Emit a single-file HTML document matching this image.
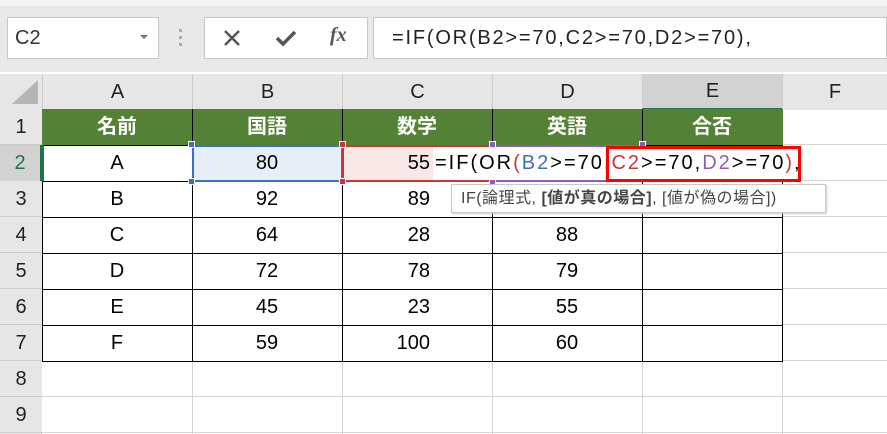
<!DOCTYPE html><html><head><meta charset="utf-8"><style>
body{margin:0;width:887px;height:434px;overflow:hidden;background:#fff;font-family:"Liberation Sans","Noto Sans CJK JP",sans-serif;position:relative}
div{position:absolute;box-sizing:border-box}
.t{font-size:20px;color:#000;text-align:center;line-height:36px}
.h{background:#e6e6e6;color:#222;font-size:20px;text-align:center}
</style></head><body>
<div style="left:0;top:0;width:887px;height:72px;background:#e8e8e8"></div>
<div style="left:0;top:0;width:887px;height:6px;background:#f3f3f3"></div>
<div style="left:7px;top:17px;width:152px;height:42px;background:#fff;border:1px solid #c8c8c8;font-size:20px;line-height:40px;padding-left:7px;color:#333">C2</div>
<div style="left:140px;top:35px;width:0;height:0;border-left:4px solid transparent;border-right:4px solid transparent;border-top:4px solid #777"></div>
<div style="left:179px;top:29px;width:3px;height:3px;background:#aaa;box-shadow:0 7px #aaa,0 14px #aaa"></div>
<div style="left:204px;top:17px;width:164px;height:42px;background:#fff;border:1px solid #c8c8c8"></div>
<svg style="position:absolute;left:222px;top:28px" width="20" height="20"><path d="M3 3L17 17M17 3L3 17" stroke="#555" stroke-width="2.5"/></svg>
<svg style="position:absolute;left:274px;top:28px" width="24" height="20"><path d="M3 10L9 16L21 4" stroke="#555" stroke-width="3.5" fill="none"/></svg>
<div style="left:330px;top:24px;font-family:'Liberation Serif',serif;font-style:italic;font-weight:bold;font-size:20px;color:#555">fx</div>
<div style="left:373px;top:17px;width:514px;height:42px;background:#fff;border:1px solid #c8c8c8;font-size:20px;line-height:40px;padding-left:18px;color:#222;letter-spacing:1.8px">=IF(OR(B2&gt;=70,C2&gt;=70,D2&gt;=70),</div>
<div style="left:0;top:74px;width:887px;height:36px;background:#e6e6e6;border-bottom:1px solid #bbb"></div>
<svg style="position:absolute;left:10px;top:78px" width="30" height="28"><path d="M28 2L28 26L2 26Z" fill="#b5b5b5"/></svg>
<div class="h" style="left:42px;top:74px;width:150px;height:36px;line-height:36px;border-left:1px solid #ccc">A</div>
<div class="h" style="left:192px;top:74px;width:150px;height:36px;line-height:36px;border-left:1px solid #ccc">B</div>
<div class="h" style="left:342px;top:74px;width:150px;height:36px;line-height:36px;border-left:1px solid #ccc">C</div>
<div class="h" style="left:492px;top:74px;width:150px;height:36px;line-height:36px;border-left:1px solid #ccc">D</div>
<div class="h" style="left:642px;top:74px;width:140px;height:36px;line-height:34px;border-left:1px solid #ccc;background:#d2d2d2;border-bottom:2px solid #217346">E</div>
<div class="h" style="left:782px;top:74px;width:105px;height:36px;line-height:36px;border-left:1px solid #ccc">F</div>
<div style="left:0;top:109px;width:42px;height:325px;background:#e6e6e6;border-right:1px solid #bbb"></div>
<div class="h" style="left:0;top:109px;width:42px;height:36px;line-height:36px;border-bottom:1px solid #ccc">1</div>
<div class="h" style="left:0;top:145px;width:42px;height:36px;line-height:36px;background:#d2d2d2;border-right:2px solid #217346;color:#217346">2</div>
<div class="h" style="left:0;top:181px;width:42px;height:36px;line-height:36px;border-bottom:1px solid #ccc">3</div>
<div class="h" style="left:0;top:217px;width:42px;height:36px;line-height:36px;border-bottom:1px solid #ccc">4</div>
<div class="h" style="left:0;top:253px;width:42px;height:36px;line-height:36px;border-bottom:1px solid #ccc">5</div>
<div class="h" style="left:0;top:289px;width:42px;height:36px;line-height:36px;border-bottom:1px solid #ccc">6</div>
<div class="h" style="left:0;top:325px;width:42px;height:36px;line-height:36px;border-bottom:1px solid #ccc">7</div>
<div class="h" style="left:0;top:361px;width:42px;height:36px;line-height:36px;border-bottom:1px solid #ccc">8</div>
<div class="h" style="left:0;top:397px;width:42px;height:36px;line-height:36px;border-bottom:1px solid #ccc">9</div>
<div style="left:42px;top:109px;width:845px;height:325px;background:
repeating-linear-gradient(to bottom,transparent 0 35px,#d4d4d4 35px 36px)"></div>
<div style="left:782px;top:109px;width:1px;height:325px;background:#d4d4d4"></div>
<div style="left:192px;top:361px;width:1px;height:73px;background:#d4d4d4"></div>
<div style="left:342px;top:361px;width:1px;height:73px;background:#d4d4d4"></div>
<div style="left:492px;top:361px;width:1px;height:73px;background:#d4d4d4"></div>
<div style="left:642px;top:361px;width:1px;height:73px;background:#d4d4d4"></div>
<div style="left:42px;top:109px;width:741px;height:253px;background:#fff;border:1px solid #000;
background-image:repeating-linear-gradient(to bottom,transparent 0 35px,#000 35px 36px)"></div>
<div style="left:42px;top:109px;width:741px;height:36px;background:#538135"></div>
<div style="left:192px;top:109px;width:1px;height:253px;background:#000"></div>
<div style="left:342px;top:109px;width:1px;height:253px;background:#000"></div>
<div style="left:492px;top:109px;width:1px;height:253px;background:#000"></div>
<div style="left:642px;top:109px;width:1px;height:253px;background:#000"></div>
<div class="t" style="left:42px;top:109px;width:150px;color:#fff;font-weight:bold">名前</div>
<div class="t" style="left:192px;top:109px;width:150px;color:#fff;font-weight:bold">国語</div>
<div class="t" style="left:342px;top:109px;width:150px;color:#fff;font-weight:bold">数学</div>
<div class="t" style="left:492px;top:109px;width:150px;color:#fff;font-weight:bold">英語</div>
<div class="t" style="left:642px;top:109px;width:140px;color:#fff;font-weight:bold">合否</div>
<div style="left:192px;top:145px;width:151px;height:37px;background:#e8eef8;border:2px solid #3c6fc4"></div>
<div style="left:342px;top:145px;width:151px;height:37px;background:#f9e6e6;border:2px solid #c8363d"></div>
<div style="left:492px;top:145px;width:151px;height:37px;border:2px solid #8e5ac0;border-left:none;border-right:none"></div>
<div style="left:188px;top:141px;width:7px;height:7px;background:#3c6fc4;border:1px solid #fff"></div>
<div style="left:188px;top:178px;width:7px;height:7px;background:#3c6fc4;border:1px solid #fff"></div>
<div style="left:339px;top:141px;width:7px;height:7px;background:#c8363d;border:1px solid #fff"></div>
<div style="left:339px;top:178px;width:7px;height:7px;background:#c8363d;border:1px solid #fff"></div>
<div style="left:489px;top:141px;width:7px;height:7px;background:#8e5ac0;border:1px solid #fff"></div>
<div style="left:639px;top:141px;width:7px;height:7px;background:#8e5ac0;border:1px solid #fff"></div>
<div style="left:489px;top:178px;width:7px;height:7px;background:#8e5ac0;border:1px solid #fff"></div>
<div style="left:42px;top:145px;width:2px;height:36px;background:#217346"></div>
<div class="t" style="left:42px;top:145px;width:150px">A</div>
<div class="t" style="left:192px;top:145px;width:150px">80</div>
<div class="t" style="left:342px;top:145px;width:88px;text-align:right">55</div>
<div style="left:433px;top:147px;width:375px;height:33px;background:#fff;font-size:20px;line-height:33px;padding-left:2px;white-space:nowrap;letter-spacing:2px">=IF(OR<span style="color:#c8363d">(</span><span style="color:#3c6fc4">B2</span>&gt;=70,<span style="color:#c8363d">C2</span>&gt;=70,<span style="color:#8e5ac0">D2</span>&gt;=70<span style="color:#c8363d">)</span>,</div>
<div style="left:606px;top:146px;width:195px;height:36px;border:3px solid #f00"></div>
<div class="t" style="left:42px;top:181px;width:150px">B</div><div class="t" style="left:192px;top:181px;width:150px">92</div><div class="t" style="left:342px;top:181px;width:88px;text-align:right">89</div>
<div class="t" style="left:42px;top:217px;width:150px">C</div><div class="t" style="left:192px;top:217px;width:150px">64</div><div class="t" style="left:342px;top:217px;width:88px;text-align:right">28</div><div class="t" style="left:492px;top:217px;width:150px">88</div>
<div class="t" style="left:42px;top:253px;width:150px">D</div><div class="t" style="left:192px;top:253px;width:150px">72</div><div class="t" style="left:342px;top:253px;width:88px;text-align:right">78</div><div class="t" style="left:492px;top:253px;width:150px">79</div>
<div class="t" style="left:42px;top:289px;width:150px">E</div><div class="t" style="left:192px;top:289px;width:150px">45</div><div class="t" style="left:342px;top:289px;width:88px;text-align:right">23</div><div class="t" style="left:492px;top:289px;width:150px">55</div>
<div class="t" style="left:42px;top:325px;width:150px">F</div><div class="t" style="left:192px;top:325px;width:150px">59</div><div class="t" style="left:342px;top:325px;width:88px;text-align:right">100</div><div class="t" style="left:492px;top:325px;width:150px">60</div>
<div style="left:451px;top:184px;width:375px;height:29px;background:#fff;border:1px solid #c8c8c8;box-shadow:1px 1px 2px #ccc;font-size:16px;line-height:27px;padding-left:9px;color:#444;white-space:nowrap;letter-spacing:0.5px">IF(論理式, <b>[値が真の場合]</b>, [値が偽の場合])</div>
</body></html>
